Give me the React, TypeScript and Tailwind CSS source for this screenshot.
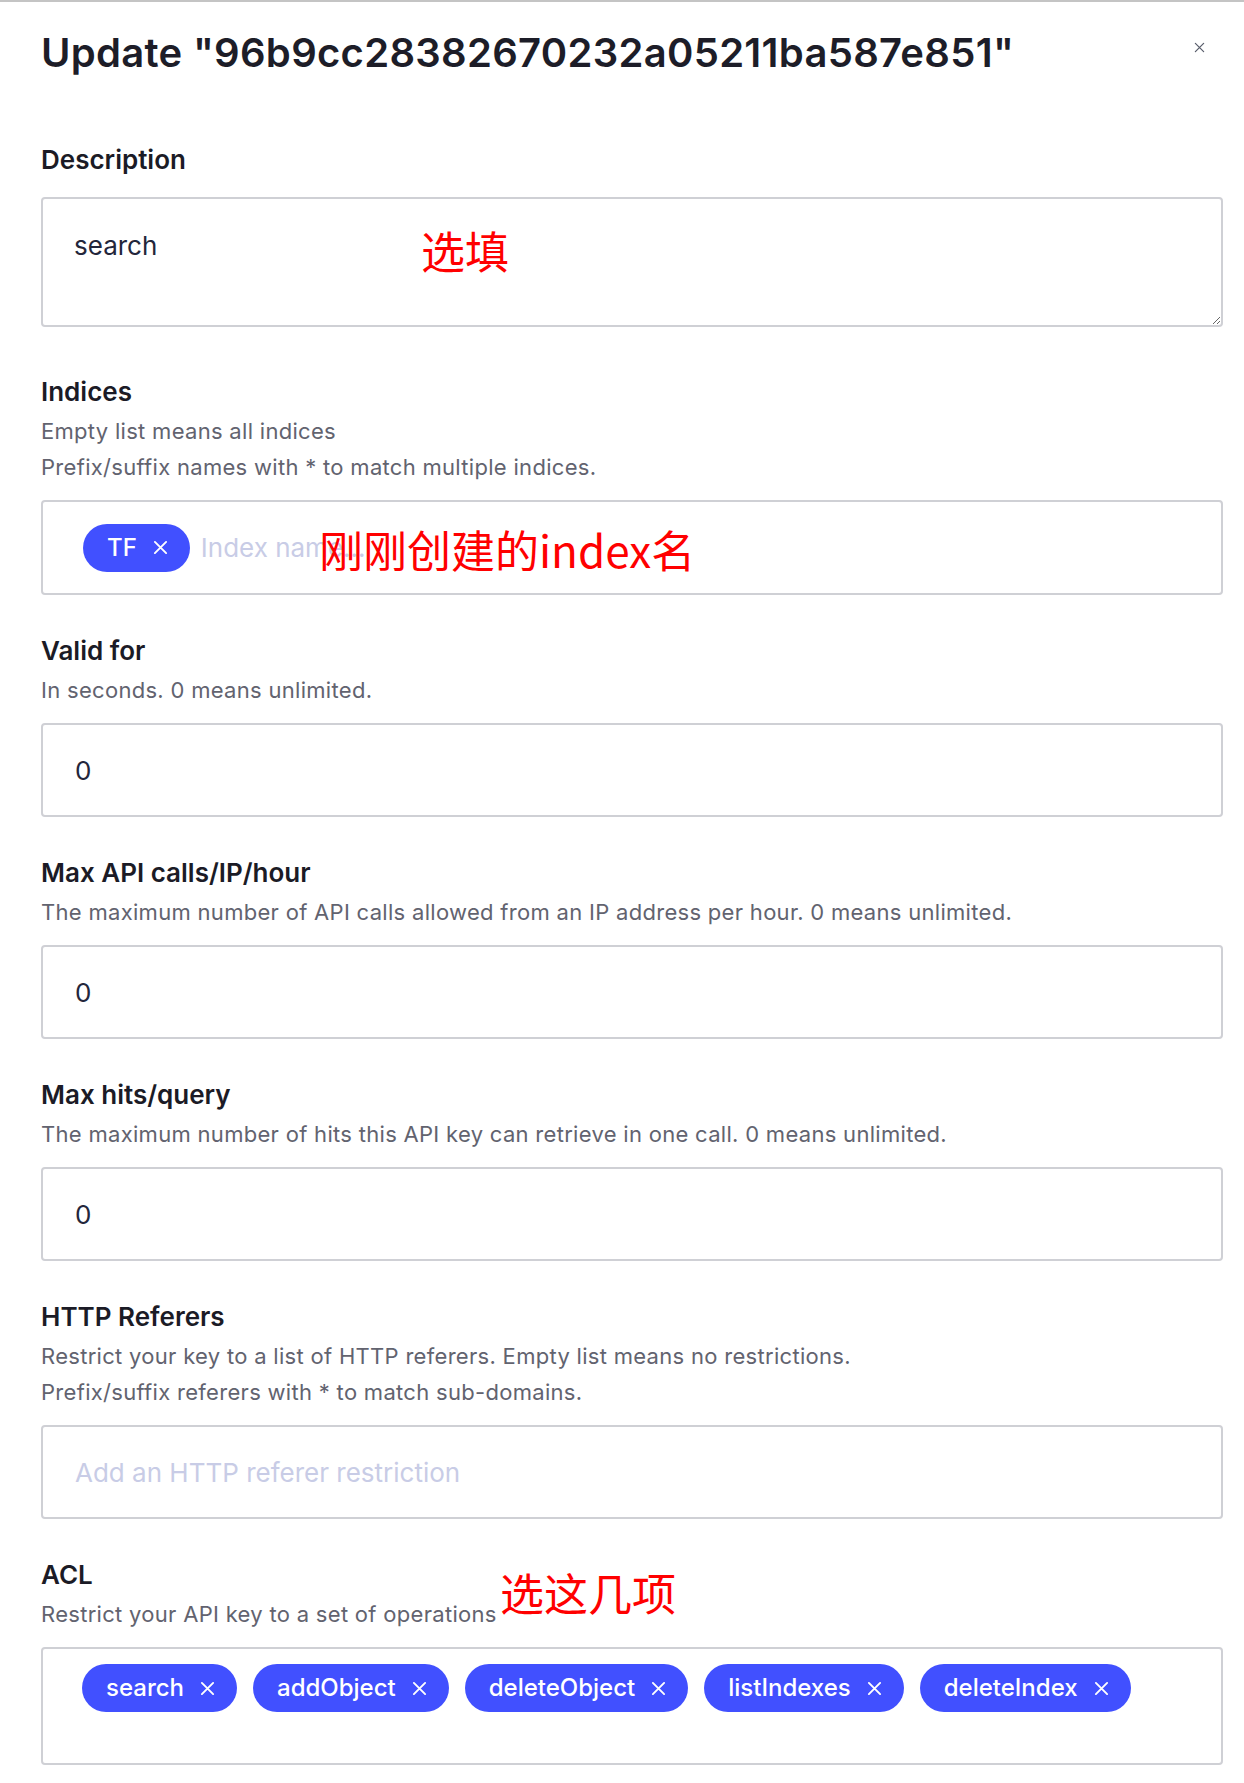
import React from "react";

const FONT = { fontFamily: "Inter, 'Noto Sans', sans-serif" };
const CJK = { fontFamily: "'Noto Sans CJK SC', 'Noto Sans', sans-serif" };

function XIcon({ size = 15, stroke = "#fff", width = 2 }: { size?: number; stroke?: string; width?: number }) {
  return (
    <svg width={size} height={size} viewBox="0 0 16 16" fill="none" stroke={stroke} strokeWidth={width} strokeLinecap="round">
      <path d="M2 2l12 12M14 2L2 14" />
    </svg>
  );
}

function Chip({ label }: { label: string }) {
  return (
    <span className="inline-flex h-[48px] shrink-0 items-center gap-[16px] rounded-full bg-[#4150ff] pl-[24px] pr-[22px] text-[24px] font-medium text-white">
      {label}
      <XIcon />
    </span>
  );
}

const labelCls = "text-[26px] font-semibold leading-[36px] text-[#1b1b26]";
const descCls = "text-[22px] leading-[36px] tracking-[0.3px] text-[#62636f]";

function Field({ label, desc = [], children, className = "" }: { label: string; desc?: string[]; children: React.ReactNode; className?: string }) {
  return (
    <section className={className}>
      <h3 className={labelCls}>{label}</h3>
      {desc.length > 0 && (
        <div className="mt-[3px] mb-[15px]">
          {desc.map((d) => (
            <p key={d} className={descCls}>{d}</p>
          ))}
        </div>
      )}
      {children}
    </section>
  );
}

const boxCls = "block h-[94px] w-full rounded-[4px] border-2 border-[#cfd0d5] bg-white px-[32px] text-[26px] text-[#23263b] outline-none placeholder:text-[#c8cce6]";

export default function App() {
  const acl = ["search", "addObject", "deleteObject", "listIndexes", "deleteIndex"];
  return (
    <div className="min-h-[1783px] w-[1244px] border-t-2 border-[#c4c4c4] bg-white pl-[41px] pr-[21px]" style={FONT}>
      {/* header */}
      <div className="flex items-start justify-between pt-[27px]">
        <h2 className="text-[40px] font-semibold leading-[48px] tracking-[0.3px] text-[#1d1d28]">Update "96b9cc28382670232a05211ba587e851"</h2>
        <button className="mt-[13px] mr-[18px] text-[#5a5e6c]" aria-label="close">
          <XIcon size={11} stroke="#5a5e6c" width={1.8} />
        </button>
      </div>

      <Field label="Description" className="mt-[65px]">
        <div className="relative mt-[19px]">
          <textarea
            defaultValue="search"
            className="block h-[130px] w-full rounded-[4px] border-2 border-[#cfd0d5] bg-white px-[31px] pt-[29px] text-[26px] leading-[36px] text-[#23263b] outline-none"
          />
          <span className="pointer-events-none absolute left-[380px] top-[31px] text-[44px] leading-[44px] text-[#ff0000]" style={CJK}>选填</span>
        </div>
      </Field>

      <Field label="Indices" desc={["Empty list means all indices", "Prefix/suffix names with * to match multiple indices."]} className="mt-[47px]">
        <div className="relative flex h-[95px] items-center gap-[11px] rounded-[4px] border-2 border-[#cfd0d5] pl-[40px]">
          <Chip label="TF" />
          <input placeholder="Index name..." className="flex-1 bg-transparent text-[26px] text-[#23263b] outline-none placeholder:text-[#c8cce6]" />
          <span className="pointer-events-none absolute left-[276px] top-[25px] text-[44px] leading-[44px] text-[#ff0000]" style={CJK}>刚刚创建的index名</span>
        </div>
      </Field>

      <Field label="Valid for" desc={["In seconds. 0 means unlimited."]} className="mt-[38px]">
        <input defaultValue="0" className={boxCls} />
      </Field>

      <Field label="Max API calls/IP/hour" desc={["The maximum number of API calls allowed from an IP address per hour. 0 means unlimited."]} className="mt-[38px]">
        <input defaultValue="0" className={boxCls} />
      </Field>

      <Field label="Max hits/query" desc={["The maximum number of hits this API key can retrieve in one call. 0 means unlimited."]} className="mt-[38px]">
        <input defaultValue="0" className={boxCls} />
      </Field>

      <Field
        label="HTTP Referers"
        desc={["Restrict your key to a list of HTTP referers. Empty list means no restrictions.", "Prefix/suffix referers with * to match sub-domains."]}
        className="mt-[38px]"
      >
        <input placeholder="Add an HTTP referer restriction" className={boxCls} />
      </Field>

      <section className="mt-[38px]">
        <h3 className={labelCls}>ACL</h3>
        <div className="relative mt-[3px] mb-[15px]">
          <p className={descCls}>Restrict your API key to a set of operations</p>
          <span className="pointer-events-none absolute left-[459px] top-[-26px] text-[44px] leading-[44px] text-[#ff0000]" style={CJK}>选这几项</span>
        </div>
        <div className="h-[118px] rounded-[4px] border-2 border-[#cfd0d5] pl-[39px] pt-[15px]">
          <div className="flex flex-wrap gap-[16px]">
            {acl.map((a) => (
              <Chip key={a} label={a} />
            ))}
          </div>
        </div>
      </section>
    </div>
  );
}
